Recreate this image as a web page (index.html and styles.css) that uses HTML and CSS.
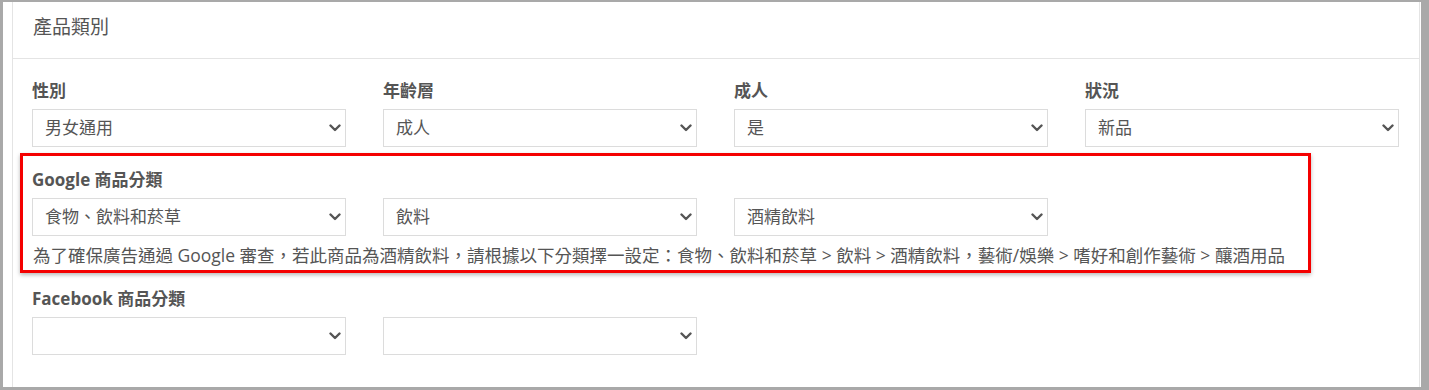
FILE: index.html
```html
<!DOCTYPE html>
<html lang="zh-Hant">
<head>
<meta charset="utf-8">
<title>產品類別</title>
<link rel="stylesheet" href="styles.css">
</head>
<body>
<div class="frame">
  <section class="panel">
    <header class="panel-head">產品類別</header>
    <div class="panel-body">
      <div class="row">
        <div class="field">
          <label class="label">性別</label>
          <div class="select-wrap">
            <select class="select"><option>男女通用</option></select>
            <svg class="chev" viewBox="0 0 12 8" width="12" height="8"><path d="M1.5 1.5 L6 6 L10.5 1.5" fill="none" stroke="#555" stroke-width="2.4" stroke-linecap="round" stroke-linejoin="round"/></svg>
          </div>
        </div>
        <div class="field">
          <label class="label">年齡層</label>
          <div class="select-wrap">
            <select class="select"><option>成人</option></select>
            <svg class="chev" viewBox="0 0 12 8" width="12" height="8"><path d="M1.5 1.5 L6 6 L10.5 1.5" fill="none" stroke="#555" stroke-width="2.4" stroke-linecap="round" stroke-linejoin="round"/></svg>
          </div>
        </div>
        <div class="field">
          <label class="label">成人</label>
          <div class="select-wrap">
            <select class="select"><option>是</option></select>
            <svg class="chev" viewBox="0 0 12 8" width="12" height="8"><path d="M1.5 1.5 L6 6 L10.5 1.5" fill="none" stroke="#555" stroke-width="2.4" stroke-linecap="round" stroke-linejoin="round"/></svg>
          </div>
        </div>
        <div class="field">
          <label class="label">狀況</label>
          <div class="select-wrap">
            <select class="select"><option>新品</option></select>
            <svg class="chev" viewBox="0 0 12 8" width="12" height="8"><path d="M1.5 1.5 L6 6 L10.5 1.5" fill="none" stroke="#555" stroke-width="2.4" stroke-linecap="round" stroke-linejoin="round"/></svg>
          </div>
        </div>
      </div>

      <div class="highlight">
        <label class="label">Google 商品分類</label>
        <div class="row">
          <div class="select-wrap">
            <select class="select"><option>食物、飲料和菸草</option></select>
            <svg class="chev" viewBox="0 0 12 8" width="12" height="8"><path d="M1.5 1.5 L6 6 L10.5 1.5" fill="none" stroke="#555" stroke-width="2.4" stroke-linecap="round" stroke-linejoin="round"/></svg>
          </div>
          <div class="select-wrap">
            <select class="select"><option>飲料</option></select>
            <svg class="chev" viewBox="0 0 12 8" width="12" height="8"><path d="M1.5 1.5 L6 6 L10.5 1.5" fill="none" stroke="#555" stroke-width="2.4" stroke-linecap="round" stroke-linejoin="round"/></svg>
          </div>
          <div class="select-wrap">
            <select class="select"><option>酒精飲料</option></select>
            <svg class="chev" viewBox="0 0 12 8" width="12" height="8"><path d="M1.5 1.5 L6 6 L10.5 1.5" fill="none" stroke="#555" stroke-width="2.4" stroke-linecap="round" stroke-linejoin="round"/></svg>
          </div>
        </div>
        <p class="help">為了確保廣告通過 Google 審查，若此商品為酒精飲料，請根據以下分類擇一設定：食物、飲料和菸草 &gt; 飲料 &gt; 酒精飲料，藝術/娛樂 &gt; 嗜好和創作藝術 &gt; 釀酒用品</p>
      </div>

      <div class="fb">
        <label class="label">Facebook 商品分類</label>
        <div class="row">
          <div class="select-wrap">
            <select class="select"><option></option></select>
            <svg class="chev" viewBox="0 0 12 8" width="12" height="8"><path d="M1.5 1.5 L6 6 L10.5 1.5" fill="none" stroke="#555" stroke-width="2.4" stroke-linecap="round" stroke-linejoin="round"/></svg>
          </div>
          <div class="select-wrap">
            <select class="select"><option></option></select>
            <svg class="chev" viewBox="0 0 12 8" width="12" height="8"><path d="M1.5 1.5 L6 6 L10.5 1.5" fill="none" stroke="#555" stroke-width="2.4" stroke-linecap="round" stroke-linejoin="round"/></svg>
          </div>
        </div>
      </div>
    </div>
  </section>
</div>
</body>
</html>
```

FILE: styles.css
```css
* { box-sizing: border-box; }

html, body {
  margin: 0;
  height: 390px;
  overflow: hidden;
}

body {
  background: #a9a9a9;
  font-family: "Open Sans", "Noto Sans CJK TC", sans-serif;
  color: #555;
  font-size: 17px;
}

.frame {
  margin: 2px 8px 0 3px;
  height: 385px;
  background: #fff;
  padding: 0 1px 0 9px;
  overflow: hidden;
}

.panel {
  height: 100%;
  border-left: 1px solid #e4e4e4;
  border-right: 1px solid #e4e4e4;
}

.panel-head {
  height: 57px;
  padding: 13px 0 0 20px;
  line-height: 24px;
  font-size: 19px;
  color: #555;
  border-bottom: 1px solid #e4e4e4;
}

.panel-body {
  padding: 20px 19px 0 19px;
}

.row {
  display: grid;
  grid-template-columns: repeat(4, 314px);
  column-gap: 37px;
}

.label {
  display: block;
  font-weight: 700;
  line-height: 24px;
  margin-bottom: 6px;
  color: #555;
}

.select-wrap {
  position: relative;
  height: 38px;
}

.select {
  appearance: none;
  -webkit-appearance: none;
  display: block;
  width: 100%;
  height: 38px;
  margin: 0;
  padding: 0 30px 0 12px;
  border: 1px solid #dcdcdc;
  border-radius: 0;
  background: #fff;
  font-family: inherit;
  font-size: 17px;
  color: #555;
  line-height: 36px;
}

.chev {
  position: absolute;
  right: 5px;
  top: 15px;
  pointer-events: none;
}

.highlight {
  margin: 6px 89px 0 -12px;
  border: 3px solid #f40000;
  box-shadow: 0 2px 4px rgba(0, 0, 0, 0.28);
  padding: 12px 0 3px 9px;
}

.help {
  margin: 7px 0 0 1px;
  line-height: 24px;
  font-size: 17.5px;
  color: #555;
  white-space: nowrap;
}

.fb {
  margin-top: 14px;
}
```
